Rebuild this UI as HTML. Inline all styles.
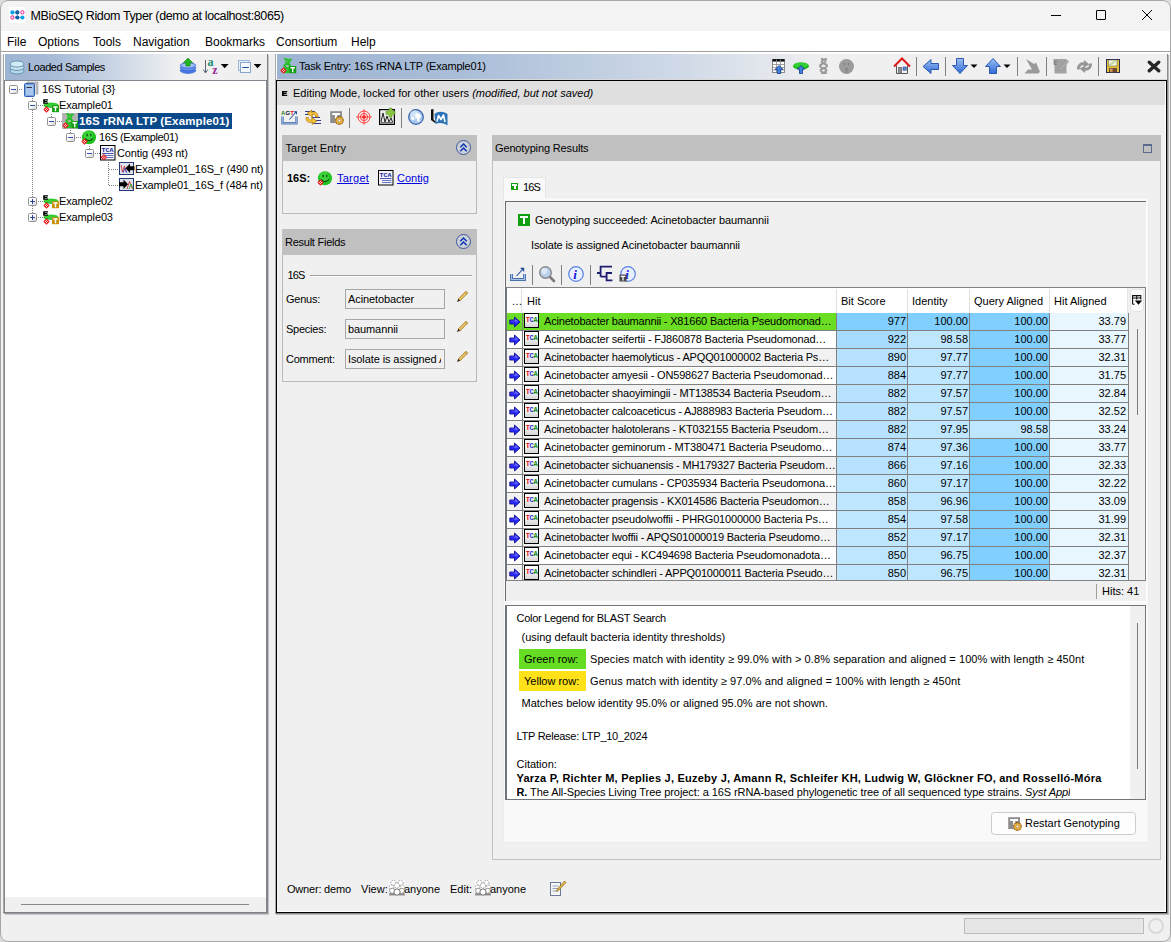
<!DOCTYPE html>
<html lang="en">
<head>
<meta charset="utf-8">
<title>MBioSEQ Ridom Typer (demo at localhost:8065)</title>
<style>
*{box-sizing:border-box;margin:0;padding:0}
html,body{width:1171px;height:942px;overflow:hidden;background:#dcdcdc}
body{font-family:"Liberation Sans",sans-serif;font-size:11px;color:#000;position:relative}
.a{position:absolute}
.t{position:absolute;white-space:nowrap;line-height:14px;height:14px}
#win{left:0;top:0;width:1171px;height:942px;background:#f0f0f0;border-radius:8px;overflow:hidden}
#frame{left:0;top:0;width:1171px;height:942px;border:1px solid #a6a6a6;border-radius:8px;pointer-events:none}
#titlebar{left:0;top:0;width:1171px;height:31px;background:#f3f3f3}
#title{left:30.5px;top:8px;font-size:12.5px;line-height:16px;height:16px;letter-spacing:-0.38px}
#menubar{left:0;top:31px;width:1171px;height:20px;background:#fff}
#menubar .t{font-size:12px;top:3px;line-height:16px;height:16px}
.hdr{background:linear-gradient(90deg,#9db4d2 0%,#a9bdd8 20%,#cfd9e7 45%,#f0f0f0 66%,#f0f0f0 100%)}
.gray{background:#c0c0c0}
a{color:#0000e0;text-decoration:underline}
/* tree */
.tr{position:absolute;left:0;height:16px;white-space:nowrap;line-height:16px}
.tr .t{top:1px}
.box{position:absolute;width:9px;height:9px;border:1px solid #919191;background:linear-gradient(135deg,#fff 40%,#d4d4d4);border-radius:1.5px}
.box i{position:absolute;left:1px;top:3px;width:5px;height:1px;background:#3050b0}
.box b{position:absolute;left:3px;top:1px;width:1px;height:5px;background:#2a3f8f}
.dv{position:absolute;width:1px;background:repeating-linear-gradient(180deg,#808080 0 1px,transparent 1px 2px)}
.dh{position:absolute;height:1px;background:repeating-linear-gradient(90deg,#808080 0 1px,transparent 1px 2px)}
/* table */
.row{position:absolute;left:0;width:622px;height:18px}
.row .c{position:absolute;top:0;height:18px;border-right:1px solid #808080;border-bottom:1px solid #808080;line-height:17px;white-space:nowrap;overflow:hidden}
.row .n{text-align:right;padding-right:1px}
.c0{left:0;width:16px}.c1{left:16px;width:314px}.c2{left:330px;width:71px}.c3{left:401px;width:62px}.c4{left:463px;width:80px}.c5{left:543px;width:79px;padding-right:2px !important}
.d1{background:#80cfff}.d2{background:#bfe6ff}.d3{background:#e8f6ff}
.tca{position:absolute;left:1px;top:0;width:15px;height:15px;border:1px solid #000;background:linear-gradient(180deg,#fafafa 30%,#d6d6d6);font-size:7px;line-height:13.5px;letter-spacing:-0.3px;font-weight:bold;text-align:center;font-family:"Liberation Mono",monospace;overflow:hidden}
.hit{position:absolute;left:21px;top:0;letter-spacing:-0.18px}
.leg{position:absolute;white-space:nowrap;line-height:14px}
.sep{position:absolute;width:1px;background:#808080}
.hdr2{background:linear-gradient(90deg,#9db4d2 0%,#a9bdd8 20%,#cfd9e7 45%,#f0f0f0 62%,#f0f0f0 100%)}
.fld{width:100px;height:20px;border:1px solid #a6a6a6;background:#f0f0f0;line-height:18px;padding-left:2px;white-space:nowrap;overflow:hidden;letter-spacing:-0.1px}
.fld span{display:block;width:93px;overflow:hidden}
.g{background:#6bdd22}.w{background:#fff}.e{background:#f2f2f2}
.d1b{background:#a6dcff}.d2a{background:#b6e2ff}
.arr{position:absolute;left:2px;top:3px}
.tca b{font-weight:bold}
#left .t{letter-spacing:-0.13px}
</style>
</head>
<body>
<svg width="0" height="0" style="position:absolute"><defs>
<g id="reddia"><path d="M3.5 0.3 L6.7 3.5 L3.5 6.7 L0.3 3.5 Z" fill="#e01010"/><path d="M3.5 1.8 V5.2 M1.8 3.5 H5.2" stroke="#fff" stroke-width="0.9"/><circle cx="3.5" cy="3.5" r="0.7" fill="#e01010"/></g>
<g id="exbase"><ellipse cx="8" cy="8.4" rx="7.4" ry="2.3" fill="#189818"/><ellipse cx="8" cy="7.7" rx="7.4" ry="2.2" fill="#35cf35"/><path d="M0.2 2.2 H5 V3.4 H1.9 V3.9 H4.4 V5.1 H1.9 V5.6 H5 V6.8 H0.2 Z" fill="#000"/><use href="#reddia" x="0" y="9"/></g>
<g id="exg"><use href="#exbase"/><rect x="9" y="8.2" width="7" height="7" fill="#12a012"/><path d="M10.3 10 H14.7 M12.5 10 V14.3" stroke="#fff" stroke-width="1.4"/></g>
<g id="exy"><use href="#exbase"/><rect x="9" y="8.2" width="7" height="7" fill="#c8900a"/><path d="M10.3 10 H14.7 M12.5 10 V14.3" stroke="#fff" stroke-width="1.4"/></g>
<g id="task"><g fill="none" stroke="#25c225" stroke-width="2.1" stroke-linecap="round"><path d="M5 1 C10.5 2.5 10.5 4.5 6.5 6 C3.5 7.5 3.5 9 7.5 10.5 C10 11.8 9 13.5 5.5 14.3"/><path d="M10.8 1.5 C5.5 3 5 4.8 8.5 6.2 C11 7.6 10.5 9.5 6.5 10.6 C4.2 11.6 4.8 13.4 8 14.3"/></g><circle cx="7.8" cy="3.6" r="0.8" fill="#b8b8b8" opacity="0.7"/><circle cx="7.3" cy="8.3" r="0.8" fill="#b8b8b8" opacity="0.7"/><rect x="9.2" y="8" width="7" height="7.2" fill="#12a012"/><path d="M10.5 9.8 H14.9 M12.7 9.8 V14.2" stroke="#fff" stroke-width="1.4"/><use href="#reddia" x="0" y="9"/></g>
<g id="smile"><circle cx="9" cy="8.2" r="7" fill="#1fc01f"/><circle cx="8.3" cy="6.5" r="4.8" fill="#4ee04e" opacity="0.55"/><path d="M7.2 4.8 V7.2 M10.8 4.8 V7.2" stroke="#0a3a0a" stroke-width="1.1"/><path d="M5 9.3 Q9 13.8 13 9.3" stroke="#0a3a0a" stroke-width="1" fill="none"/><use href="#reddia" x="1" y="9"/></g>
<g id="contig"><rect x="0.5" y="0.5" width="14.5" height="14.5" fill="#f4f4fa" stroke="#000"/><text x="1.6" y="7" font-family="Liberation Mono,monospace" font-weight="bold" font-size="6.2" fill="#1a2a9a" textLength="12" lengthAdjust="spacingAndGlyphs">TCA</text><path d="M2 8.5 H13.5" stroke="#1a2a9a" stroke-width="0.8"/><path d="M4 10.5 H13.5 M4 12.5 H13.5" stroke="#5a66b8" stroke-width="0.9"/></g>
<g id="chev"><circle cx="8.5" cy="8.5" r="7" fill="#cdd1da" stroke="#2c4a96" stroke-width="0.9"/><path d="M5.3 8.2 L8.5 5 L11.7 8.2 M5.3 12.2 L8.5 9 L11.7 12.2" fill="none" stroke="#0a32b4" stroke-width="1.5"/></g>
<g id="pencil"><path d="M12.5 1.2 L14.8 3.5 L6 12.3 L3.7 10 Z" fill="#e2bc62" stroke="#9a7a2a" stroke-width="0.7"/><path d="M3.7 10 L6 12.3 L2.2 13.8 Z" fill="#3a2a1a"/><path d="M11.3 2.4 L13.6 4.7" stroke="#9a7a2a" stroke-width="0.7"/></g>
<g id="grp"><rect x="0" y="0" width="16" height="16" fill="#fafafa"/><g fill="#fff" stroke="#8c8c8c" stroke-width="0.9" stroke-dasharray="1.5 1"><circle cx="4.5" cy="2.8" r="2.6"/><circle cx="11.5" cy="2.8" r="2.6"/><circle cx="8" cy="5.5" r="2.6"/><circle cx="2.5" cy="7.5" r="2.4"/><circle cx="13.5" cy="7.5" r="2.4"/></g><path d="M0 15.5 C0 12.5 1.5 11.5 4 12.5 L8 15.5 L12 12.5 C14.5 11.5 16 12.5 16 15.5 Z" fill="#8a8a8a"/><circle cx="3.2" cy="10.8" r="2.6" fill="#fff" stroke="#8a8a8a" stroke-width="0.9"/><circle cx="12.8" cy="10.8" r="2.6" fill="#fff" stroke="#8a8a8a" stroke-width="0.9"/><circle cx="8" cy="12" r="3.1" fill="#fff" stroke="#7a7a7a" stroke-width="1"/></g>
<g id="arrow"><path d="M0.8 4 H5.5 V1 L11 6 L5.5 11 V8 H0.8 Z" fill="#2a2aff" stroke="#10108a" stroke-width="0.9"/><path d="M1.5 4.8 H6.2 V3 L9.5 6 Z" fill="#8a8aff" opacity="0.8"/></g>
<g id="tgear"><rect x="2.2" y="2.2" width="11.8" height="11.8" fill="#8e8e8e"/><path d="M4.2 5 H12 M8.1 5 V13" stroke="#fff" stroke-width="2.2"/><g transform="translate(11.4,11.5)" fill="#dc9e22" stroke="#7a4c12" stroke-width="0.5"><rect x="-1" y="-4.2" width="2" height="8.4"/><rect x="-1" y="-4.2" width="2" height="8.4" transform="rotate(45)"/><rect x="-1" y="-4.2" width="2" height="8.4" transform="rotate(90)"/><rect x="-1" y="-4.2" width="2" height="8.4" transform="rotate(135)"/><circle r="3" fill="#ebb544" stroke="none"/><circle r="1.3" fill="#fff" stroke-width="0.4"/></g></g>
<linearGradient id="bl" x1="0" y1="0" x2="0" y2="1"><stop offset="0" stop-color="#9cc0f4"/><stop offset="1" stop-color="#2f6ad8"/></linearGradient>
<g id="info"><circle cx="9" cy="9" r="7.3" fill="#e8f0ff" stroke="#5a82e0" stroke-width="1.2"/><text x="6.2" y="13.6" font-family="Liberation Serif,serif" font-style="italic" font-weight="bold" font-size="13" fill="#1a1ae0">i</text></g>
</defs></svg>
<div id="win" class="a">

<!-- title bar -->
<div id="titlebar" class="a">
<svg class="a" style="left:9px;top:7px" width="16" height="16" viewBox="0 0 16 16"><rect width="16" height="16" fill="#fff"/>
<circle cx="3.4" cy="5.4" r="2.1" fill="#00a2e8"/><circle cx="8.3" cy="5.4" r="2.1" fill="#0b5ea8"/><circle cx="13.4" cy="5.4" r="1.6" fill="#fff" stroke="#f03ea0" stroke-width="1.1"/>
<circle cx="3.4" cy="10.5" r="1.6" fill="#fff" stroke="#f03ea0" stroke-width="1.1"/><circle cx="8.3" cy="10.5" r="2.1" fill="#0b5ea8"/><circle cx="13.4" cy="10.5" r="2.1" fill="#00a2e8"/>
<path d="M5.5 5.4 H6.2 M8.3 7.5 V8.4 M10.4 10.5 H11.3" stroke="#0b5ea8" stroke-width="0.7"/></svg>
<div id="title" class="t">MBioSEQ Ridom Typer (demo at localhost:8065)</div>
<div class="a" style="left:1051px;top:15px;width:10px;height:1px;background:#000"></div>
<div class="a" style="left:1096px;top:10px;width:10px;height:10px;border:1px solid #000;border-radius:1px"></div>
<svg class="a" style="left:1141px;top:9px" width="12" height="12" viewBox="0 0 12 12"><path d="M1 1 L11 11 M11 1 L1 11" stroke="#000" stroke-width="1" fill="none"/></svg>
</div>

<!-- menu bar -->
<div id="menubar" class="a">
<div class="t" style="left:7px">File</div>
<div class="t" style="left:38px">Options</div>
<div class="t" style="left:93px">Tools</div>
<div class="t" style="left:133px">Navigation</div>
<div class="t" style="left:205px">Bookmarks</div>
<div class="t" style="left:276px">Consortium</div>
<div class="t" style="left:351px">Help</div>
</div>
<div class="a" style="left:0;top:51px;width:1171px;height:1px;background:#a0a0a0"></div>
<div class="a" style="left:0;top:52px;width:1171px;height:2px;background:#fff"></div>

<!-- LEFT PANEL -->
<div id="left" class="a" style="left:4px;top:54px;width:263px;height:858px;background:#fff">
<div class="a" style="left:-1px;top:0;width:1px;height:859px;background:#a8a8a8"></div>
<div class="a" style="left:262px;top:26px;width:1px;height:833px;background:#828790"></div><div class="a" style="left:263px;top:0;width:1px;height:861px;background:#80848a"></div><div class="a" style="left:264px;top:1px;width:1px;height:860px;background:#c2c2c2"></div>
<div class="a" style="left:-1px;top:858px;width:265px;height:1px;background:#7c8088"></div><div class="a" style="left:0;top:859px;width:264px;height:1px;background:#9a9ca0"></div><div class="a" style="left:1px;top:860px;width:264px;height:1px;background:#cacaca"></div>
<div class="a" style="left:0;top:26px;width:1px;height:832px;background:#828790"></div>
<div class="a hdr" style="left:1px;top:0;width:262px;height:26px">
<svg class="a" style="left:4px;top:6px" width="16" height="15" viewBox="0 0 16 15"><g stroke="#4f86a8" stroke-width="0.8"><ellipse cx="8" cy="11" rx="7" ry="3" fill="#b8d8e8"/><ellipse cx="8" cy="7.5" rx="7" ry="3" fill="#c4e0ee"/><ellipse cx="8" cy="4" rx="7" ry="3" fill="#d4eaf4"/></g></svg>
<div class="t" style="left:23px;top:6px;letter-spacing:-0.4px">Loaded Samples</div>
<svg class="a" style="left:174px;top:3px" width="18" height="18" viewBox="0 0 18 18"><g stroke="#2f5fd0" stroke-width="0.7"><ellipse cx="9" cy="13.6" rx="7.8" ry="2.8" fill="#4a7ae8"/><ellipse cx="9" cy="11" rx="7.8" ry="2.8" fill="#6a96f0"/><ellipse cx="9" cy="8.4" rx="7.8" ry="2.8" fill="#8ab0f6"/></g><ellipse cx="9" cy="8.2" rx="5" ry="1.5" fill="#c4d8fb" opacity="0.7"/><path d="M9 1 L13.8 5.8 H11.2 V9 H6.8 V5.8 H4.2 Z" fill="#22b422" stroke="#158a15" stroke-width="0.6"/></svg>
<svg class="a" style="left:196px;top:3px" width="30" height="20" viewBox="0 0 30 20"><path d="M4.5 3 V15.5 M2.2 12.5 L4.5 16 L6.8 12.5" stroke="#5a6478" stroke-width="1" fill="none"/><text x="6.6" y="8.8" font-family="Liberation Serif,serif" font-weight="bold" font-size="12" fill="#1a8a72">a</text><text x="11.2" y="17" font-family="Liberation Serif,serif" font-weight="bold" font-size="12" fill="#962a96">z</text><path d="M19.8 7 H27.6 L23.7 11.2 Z" fill="#000"/></svg>
<svg class="a" style="left:231px;top:4px" width="28" height="18" viewBox="0 0 28 18"><rect x="2.5" y="2.5" width="10.5" height="10" fill="#e8f0fa" stroke="#9ab4d8"/><rect x="4.5" y="4.5" width="10" height="10" fill="#f4f8fd" stroke="#8aa6cc"/><path d="M6.3 9.5 H12.8" stroke="#1f4f9a" stroke-width="1.2"/><path d="M17.7 6 H25.4 L21.5 10.2 Z" fill="#000"/></svg>
</div>
<div class="a" style="left:0;top:26px;width:263px;height:1px;background:#828790"></div>
<!-- tree lines -->
<div class="dv" style="left:28px;top:44px;height:122px"></div>
<div class="dv" style="left:47px;top:60px;height:8px"></div>
<div class="dv" style="left:66px;top:76px;height:8px"></div>
<div class="dv" style="left:85px;top:92px;height:8px"></div>
<div class="dv" style="left:104px;top:108px;height:24px"></div>
<div class="dh" style="left:15px;top:35px;width:4px"></div>
<div class="dh" style="left:34px;top:51px;width:5px"></div>
<div class="dh" style="left:53px;top:67px;width:5px"></div>
<div class="dh" style="left:72px;top:83px;width:5px"></div>
<div class="dh" style="left:91px;top:99px;width:5px"></div>
<div class="dh" style="left:105px;top:115px;width:9px"></div>
<div class="dh" style="left:105px;top:131px;width:9px"></div>
<div class="dh" style="left:34px;top:147px;width:5px"></div>
<div class="dh" style="left:34px;top:163px;width:5px"></div>
<!-- row1 -->
<div class="box" style="left:5px;top:31px"><i></i></div>
<svg class="a" style="left:19px;top:27px" width="17" height="17" viewBox="0 0 17 17"><path d="M4 1 H15 V13 H13 V3 H4 Z" fill="#c8c8c8" stroke="#909090" stroke-width="0.6"/><rect x="1.5" y="2.5" width="10" height="13" rx="1" fill="#7fa8de" stroke="#2f5fae"/><rect x="3" y="4" width="7" height="10" fill="#a9c6ec"/><path d="M3.5 6.5 H9" stroke="#334" stroke-width="1"/></svg>
<div class="t" style="left:38px;top:28px">16S Tutorial {3}</div>
<!-- row2 -->
<div class="box" style="left:24px;top:47px"><i></i></div>
<svg class="a ex" style="left:39px;top:43px" width="17" height="17" viewBox="0 0 17 17"><use href="#exg"/></svg>
<div class="t" style="left:55px;top:44px">Example01</div>
<!-- row3 -->
<div class="box" style="left:43px;top:63px"><i></i></div>
<div class="a" style="left:58px;top:59px;width:16px;height:16px;background:#b4b4b4"></div>
<svg class="a" style="left:58px;top:59px" width="17" height="17" viewBox="0 0 17 17"><use href="#task"/></svg>
<div class="a" style="left:74px;top:59px;width:154px;height:16px;background:#0b4a8a"></div>
<div class="t" style="left:75px;top:60px;color:#fff;font-weight:bold;font-size:11.5px;letter-spacing:0.13px">16S rRNA LTP (Example01)</div>
<!-- row4 -->
<div class="box" style="left:62px;top:79px"><i></i></div>
<svg class="a" style="left:76px;top:75px" width="18" height="17" viewBox="0 0 18 17"><use href="#smile"/></svg>
<div class="t" style="left:95px;top:76px;letter-spacing:-0.4px">16S (Example01)</div>
<!-- row5 -->
<div class="box" style="left:81px;top:95px"><i></i></div>
<svg class="a" style="left:95.5px;top:91px" width="17" height="17" viewBox="0 0 17 17"><use href="#contig"/><use href="#reddia" x="0.3" y="8.8"/></svg>
<div class="t" style="left:113px;top:92px">Contig (493 nt)</div>
<!-- row6 -->
<svg class="a" style="left:115px;top:108px" width="16" height="14" viewBox="0 0 16 14"><rect x="0.5" y="0.5" width="14" height="12" fill="#dfe3ee" stroke="#223a7a"/><path d="M2 3 L3.5 10 L5.5 4 L7 10" stroke="#c02020" stroke-width="0.8" fill="none"/><path d="M4 11 L6 6 L8 11" stroke="#2030c0" stroke-width="0.7" fill="none"/><path d="M6.5 6.3 L11 1.6 V4.3 H15.5 V8.3 H11 V11 Z" fill="#000"/></svg>
<div class="t" style="left:131px;top:108px">Example01_16S_r (490 nt)</div>
<!-- row7 -->
<svg class="a" style="left:115px;top:124px" width="16" height="14" viewBox="0 0 16 14"><rect x="0.5" y="0.5" width="14" height="12" fill="#dfe3ee" stroke="#223a7a"/><path d="M8 11 L10.5 3.5 L13.5 11" stroke="#c02020" stroke-width="0.8" fill="none"/><path d="M10 11 L12 6 L14 10" stroke="#20a020" stroke-width="0.8" fill="none"/><path d="M9 6.3 L4.5 1.6 V4.3 H0 V8.3 H4.5 V11 Z" fill="#000"/></svg>
<div class="t" style="left:131px;top:124px">Example01_16S_f (484 nt)</div>
<!-- row8 -->
<div class="box" style="left:24px;top:143px"><i></i><b></b></div>
<svg class="a" style="left:39px;top:139px" width="17" height="17" viewBox="0 0 17 17"><use href="#exy"/></svg>
<div class="t" style="left:55px;top:140px">Example02</div>
<!-- row9 -->
<div class="box" style="left:24px;top:159px"><i></i><b></b></div>
<svg class="a" style="left:39px;top:155px" width="17" height="17" viewBox="0 0 17 17"><use href="#exy"/></svg>
<div class="t" style="left:55px;top:156px">Example03</div>
<!-- bottom scrollbar area -->
<div class="a" style="left:1px;top:843px;width:261px;height:15px;background:#f0f0f0"></div>
<div class="a" style="left:17px;top:850px;width:228px;height:1px;background:#8a8a8a"></div>
</div>

<!-- RIGHT PANEL -->
<div id="right" class="a" style="left:0;top:0;width:0;height:0">
<div class="a" style="left:275px;top:54px;width:1px;height:859px;background:#a8a8a8"></div>
<div class="a" style="left:276px;top:54px;width:1px;height:26px;background:#fff"></div>
<div class="a hdr2" style="left:277px;top:54px;width:890px;height:25px"></div>
<div class="a" style="left:276px;top:79px;width:891px;height:1px;background:#d8d8d8"></div>
<div class="a" style="left:276px;top:80px;width:891px;height:833px;border:1px solid #000;background:#f0f0f0"></div>
<div class="a" style="left:1165px;top:81px;width:1px;height:831px;background:#fff"></div>
<div class="a" style="left:277px;top:911px;width:889px;height:1px;background:#fff"></div>
<div class="a" style="left:1167px;top:54px;width:1px;height:860px;background:#8c8c8c"></div><div class="a" style="left:1168px;top:55px;width:1px;height:860px;background:#b8b8b8"></div>
<div class="a" style="left:275px;top:913px;width:893px;height:1px;background:#8c8c8c"></div><div class="a" style="left:276px;top:914px;width:893px;height:1px;background:#bcbcbc"></div>
<!-- header content -->
<svg class="a" style="left:279.8px;top:58px" width="17" height="17" viewBox="0 0 17 17"><use href="#task"/></svg>
<div class="t" style="left:299px;top:59px;letter-spacing:-0.2px">Task Entry: 16S rRNA LTP (Example01)</div>
<div id="htb" class="a" style="left:0;top:0">
<!-- table upload -->
<svg class="a" style="left:771px;top:58px" width="16" height="16" viewBox="0 0 16 16"><rect x="1.5" y="1.5" width="12" height="13" fill="#fff" stroke="#8a8a8a"/><rect x="1.5" y="1" width="12" height="2.6" fill="#111"/><path d="M5.5 1.5 V14.5 M9.5 1.5 V14.5 M1.5 6.5 H13.5 M1.5 9.5 H13.5 M1.5 12 H13.5" stroke="#8a8a8a" stroke-width="0.8"/><path d="M8 7.5 L12 11.5 H9.7 V15.5 H6.3 V11.5 H4 Z" fill="#3f7fe0" stroke="#143a8a" stroke-width="0.8"/></svg>
<!-- green upload -->
<svg class="a" style="left:792px;top:58px" width="18" height="16" viewBox="0 0 18 16"><ellipse cx="9" cy="8" rx="8" ry="3.6" fill="#17b417"/><ellipse cx="9" cy="7.2" rx="7" ry="2.6" fill="#2fd02f"/><path d="M9 7.5 L12.6 11.2 H10.5 V15.5 H7.5 V11.2 H5.4 Z" fill="#3f7fe0" stroke="#143a8a" stroke-width="0.8"/></svg>
<!-- gray dna -->
<svg class="a" style="left:818px;top:58px" width="12" height="16" viewBox="0 0 12 16"><path d="M3 0.5 C9 2.5 9 4 4 6 C1 7.5 1 9 6 10.5 C10 12 9 14 3 15.5 M9 0.5 C3 2.5 2 4 7 6 C10 7.5 10 9 5 10.5 C1 12 2 14 9 15.5" stroke="#9a9a9a" stroke-width="2" fill="none"/></svg>
<!-- gray smiley -->
<svg class="a" style="left:838px;top:58px" width="17" height="17" viewBox="0 0 17 17"><circle cx="8.5" cy="8.5" r="7.5" fill="#9c9c9c"/><path d="M6.5 5 V7 M10.5 5 V7" stroke="#7a7a7a" stroke-width="1.1"/><path d="M8.5 9 L11 12 H9.5 V15 H7.5 V12 H6 Z" fill="#8a8a8a"/></svg>
<!-- home -->
<svg class="a" style="left:893px;top:57px" width="18" height="18" viewBox="0 0 18 18"><path d="M3.5 8.5 V16.5 H14.5 V8.5" fill="#f4f4f4" stroke="#555" stroke-width="1"/><rect x="5.5" y="10.5" width="3" height="6" fill="#8a8a8a" stroke="#555" stroke-width="0.6"/><rect x="10" y="10" width="3.2" height="3.2" fill="#5a8ad8" stroke="#2a4a8a" stroke-width="0.6"/><path d="M1 9.5 L9 1.5 L17 9.5" fill="none" stroke="#e01818" stroke-width="2" stroke-linejoin="miter"/></svg>
<div class="sep" style="left:916px;top:57px;height:19px"></div>
<!-- left arrow -->
<svg class="a" style="left:922px;top:58px" width="18" height="17" viewBox="0 0 18 17"><path d="M1 8.5 L9 1.5 V5.5 H16.5 V11.5 H9 V15.5 Z" fill="url(#bl)" stroke="#2a5ab0" stroke-width="1"/></svg>
<div class="sep" style="left:945px;top:57px;height:19px"></div>
<!-- down arrow -->
<svg class="a" style="left:951px;top:57px" width="28" height="18" viewBox="0 0 28 18"><path d="M9 16.5 L1.5 8.5 H5.5 V1.5 H12.5 V8.5 H16.5 Z" fill="url(#bl)" stroke="#2a5ab0" stroke-width="1"/><path d="M19.5 7.5 H26.5 L23 11 Z" fill="#000"/></svg>
<!-- up arrow -->
<svg class="a" style="left:984px;top:57px" width="28" height="18" viewBox="0 0 28 18"><path d="M9 1.5 L16.5 9.5 H12.5 V16.5 H5.5 V9.5 H1.5 Z" fill="url(#bl)" stroke="#2a5ab0" stroke-width="1"/><path d="M19.5 7.5 H26.5 L23 11 Z" fill="#000"/></svg>
<div class="sep" style="left:1017px;top:57px;height:19px"></div>
<!-- gray arrow -->
<svg class="a" style="left:1023px;top:57px" width="18" height="18" viewBox="0 0 18 18"><path d="M3 2 L11 7 L13 5.5 L17 15 L15 16.5 H1.5 L5 12.5 H9 L7 9 Z" fill="#9a9a9a"/></svg>
<div class="sep" style="left:1046px;top:57px;height:19px"></div>
<!-- gray doc -->
<svg class="a" style="left:1052px;top:58px" width="18" height="17" viewBox="0 0 18 17"><path d="M1.5 1 H13.5 L17 3 L14.5 6.5 V15.5 H2.5 V7 H1.5 Z" fill="#a2a2a2"/><path d="M5 3 H2.5 V6.5 H5 M2.5 4.7 H4.6" stroke="#808080" stroke-width="0.9" fill="none"/><path d="M14.5 2.5 L7.5 10.5 L6.5 13 L9 12 L16 4" fill="#b4b4b4" stroke="#8c8c8c" stroke-width="0.6"/></svg>
<!-- gray sync -->
<svg class="a" style="left:1076px;top:58px" width="17" height="17" viewBox="0 0 17 17"><g fill="none" stroke="#969696" stroke-width="2.8"><path d="M2.5 11.5 C2 7.5 5 5 9 6"/><path d="M14.5 5.5 C15 9.5 12 12 8 11"/></g><path d="M8 2 L13.5 6.5 L7.5 9.5 Z" fill="#969696"/><path d="M9 15 L3.5 10.5 L9.5 7.5 Z" fill="#969696"/></svg>
<div class="sep" style="left:1098px;top:57px;height:19px"></div>
<!-- save -->
<svg class="a" style="left:1106px;top:59px" width="14" height="14" viewBox="0 0 14 14"><rect x="0.5" y="0.5" width="13" height="13" fill="#e2c23a" stroke="#2a2a55" stroke-width="1"/><rect x="2.5" y="1" width="8.5" height="6" fill="#f2f6e2" stroke="#5a5a3a" stroke-width="0.5"/><path d="M3.2 6.3 L10 1.6" stroke="#c4d6a2" stroke-width="2"/><rect x="3" y="9" width="8" height="4.5" fill="#6a4a34"/><rect x="4" y="9.6" width="2.6" height="3.2" fill="#d89a58"/></svg>
<!-- X -->
<svg class="a" style="left:1147px;top:60px" width="14" height="13" viewBox="0 0 14 13"><path d="M2.3 2.2 L11.7 10.8 M11.7 2.2 L2.3 10.8" stroke="#262626" stroke-width="3.4" stroke-linecap="round"/></svg>
</div>
<!-- editing bar -->
<div class="a" style="left:277px;top:81px;width:888px;height:24px;background:#dfdfdf"></div>
<svg class="a" style="left:282px;top:91px" width="5.6" height="5.2" viewBox="0 0 6 6" preserveAspectRatio="none"><path d="M0 0 H5.6 V1.4 H1.9 V2.1 H5 V3.5 H1.9 V4.3 H5.6 V5.7 H0 Z" fill="#000"/></svg>
<div class="t" style="left:293px;top:86px">Editing Mode, locked for other users <i>(modified, but not saved)</i></div>
<div id="tb2" class="a" style="left:0;top:0">
<svg class="a" style="left:281px;top:109px" width="17" height="17" viewBox="0 0 17 17"><text x="0" y="5.6" font-family="Liberation Sans,sans-serif" font-weight="bold" font-size="5.8" letter-spacing="0.3"><tspan fill="#108010">A</tspan><tspan fill="#111">G</tspan><tspan fill="#e01010">T</tspan></text><path d="M1.5 7.5 V14.3 H15.5 V7.5" fill="none" stroke="#5078b4" stroke-width="2.4"/><path d="M1.5 7.5 V14.3 H15.5 V7.5" fill="none" stroke="#c4d4ec" stroke-width="0.6"/><path d="M8.5 10.5 L14.5 3.5" stroke="#1f4a9a" stroke-width="1"/><path d="M12.5 2.2 H16 V5.7 Z" fill="#1f4a9a"/></svg>
<svg class="a" style="left:304px;top:109px" width="18" height="17" viewBox="0 0 18 17"><path d="M1 2.5 H11 M1 5.5 H9 M8 8.5 H16 M8 11.5 H17 M9 14.5 H17" stroke="#3a3a8a" stroke-width="1"/><path d="M14 8 C14.5 3.5 10 2 7.5 3.5 L8 1 L3 4.5 L8.5 8 L8 5.8 C10 5 12 6 11.5 8 Z" fill="#f6c23a" stroke="#a87a10" stroke-width="0.7"/><path d="M2 8.5 C1.5 13 6 14.5 8.5 13 L8 15.5 L13 12 L7.5 8.5 L8 10.7 C6 11.5 4 10.5 4.5 8.5 Z" fill="#f6c23a" stroke="#a87a10" stroke-width="0.7"/></svg>
<svg class="a" style="left:328px;top:109px" width="17" height="17" viewBox="0 0 17 17"><use href="#tgear"/></svg>
<div class="sep" style="left:349px;top:108px;height:20px"></div>
<svg class="a" style="left:355px;top:108px" width="18" height="18" viewBox="0 0 18 18"><g fill="none" stroke="#ff3a3a"><circle cx="9" cy="9" r="6" stroke-width="1"/><circle cx="9" cy="9" r="3.6" stroke-width="1"/><path d="M9 1.2 V16.8 M1.2 9 H16.8" stroke-width="0.9"/></g><circle cx="9" cy="9" r="1.8" fill="#ff2020"/></svg>
<svg class="a" style="left:378px;top:107px" width="19" height="19" viewBox="0 0 19 19"><rect x="1.6" y="2.6" width="14.8" height="14.8" fill="#ececec" stroke="#000" stroke-width="1.2"/><path d="M3 15 L5 6 L7 15 L9 9 L11 15 L13 11 L14.5 15" fill="none" stroke="#222" stroke-width="1"/><path d="M3 15.8 H15" stroke="#222" stroke-width="0.9"/><path d="M11 1.2 H14 V4.2 H17 V7.2 H14 V10.2 H11 V7.2 H8 V4.2 H11 Z" fill="#8cc63f" stroke="#5a9a24" stroke-width="0.6"/></svg>
<div class="sep" style="left:401px;top:108px;height:20px"></div>
<svg class="a" style="left:407px;top:108px" width="18" height="18" viewBox="0 0 18 18"><circle cx="9" cy="9" r="7.3" fill="#a8c8f0" stroke="#3a62a8" stroke-width="1.2"/><circle cx="7.5" cy="7" r="4.5" fill="#d8e8fa" opacity="0.8"/><path d="M9 5 L13 6 L14 9 L12 11 L13 13 L10.5 14 L10 10 L8 8 Z M4 9 L7 10 L6.5 12.5 L4.5 11.5 Z" fill="#fff"/></svg>
<svg class="a" style="left:430px;top:108px" width="19" height="19" viewBox="0 0 19 19"><path d="M1 1.5 L3.5 1 V11.5 L6 14 L5 15 L1 12 Z" fill="#111"/><path d="M4.5 6 C8 3 13 3 17.5 6 V17.5 C13 14.5 9 14.5 5.5 16 Z" fill="#2a72b8"/><path d="M7 13.5 L8.5 7.5 L11 11.5 L13.5 7 L15 14" fill="none" stroke="#fff" stroke-width="1.6" stroke-linejoin="round"/></svg>
</div>
<!-- Target Entry -->
<div class="a" style="left:282px;top:135px;width:195px;height:79px;border:1px solid #b9b9b9"></div>
<div class="a gray" style="left:282px;top:135px;width:195px;height:26px"></div>
<div class="t" style="left:285.5px;top:141px;letter-spacing:0.1px">Target Entry</div>
<svg class="a" style="left:455px;top:139px" width="17" height="17" viewBox="0 0 17 17"><use href="#chev"/></svg>
<div class="t" style="left:287px;top:171px;font-weight:bold">16S:</div>
<svg class="a" style="left:316px;top:170px" width="18" height="17" viewBox="0 0 18 17"><use href="#smile"/></svg>
<div class="t" style="left:337px;top:171px;letter-spacing:0.25px"><a>Target</a></div>
<svg class="a" style="left:377.5px;top:170px" width="17" height="17" viewBox="0 0 17 17"><use href="#contig"/></svg>
<div class="t" style="left:397px;top:171px"><a>Contig</a></div>
<!-- Result Fields -->
<div class="a" style="left:282px;top:229px;width:195px;height:153px;border:1px solid #b9b9b9"></div>
<div class="a gray" style="left:282px;top:229px;width:195px;height:26px"></div>
<div class="t" style="left:285px;top:235px;letter-spacing:-0.25px">Result Fields</div>
<svg class="a" style="left:455px;top:233px" width="17" height="17" viewBox="0 0 17 17"><use href="#chev"/></svg>
<div class="t" style="left:287.5px;top:268px;letter-spacing:-0.9px">16S</div>
<div class="a" style="left:310px;top:275px;width:162px;height:1px;background:#a0a0a0"></div><div class="a" style="left:310px;top:276px;width:162px;height:1px;background:#fff"></div>
<div class="t" style="left:286px;top:292px;letter-spacing:-0.25px">Genus:</div>
<div class="a fld" style="left:345px;top:289px">Acinetobacter</div>
<div class="t" style="left:286px;top:322px;letter-spacing:-0.25px">Species:</div>
<div class="a fld" style="left:345px;top:319px">baumannii</div>
<div class="t" style="left:286px;top:352px;letter-spacing:-0.25px">Comment:</div>
<div class="a fld" style="left:345px;top:349px"><span>Isolate is assigned Acinetobacter baumannii</span></div>
<svg class="a" style="left:455px;top:290px" width="14" height="14" viewBox="0 0 16 16"><use href="#pencil"/></svg>
<svg class="a" style="left:455px;top:320px" width="14" height="14" viewBox="0 0 16 16"><use href="#pencil"/></svg>
<svg class="a" style="left:455px;top:350px" width="14" height="14" viewBox="0 0 16 16"><use href="#pencil"/></svg>
<!-- Genotyping Results -->
<div id="geno" class="a" style="left:0;top:0">
<div class="a" style="left:492px;top:135px;width:669px;height:725px;border:1px solid #c2c2c2"></div>
<div class="a gray" style="left:492px;top:135px;width:669px;height:26px"></div>
<div class="t" style="left:495px;top:141px;letter-spacing:-0.14px">Genotyping Results</div>
<div class="a" style="left:1143px;top:144px;width:9px;height:9px;border:1px solid #5a6a8a;border-top:2px solid #5a6a8a"></div>
<!-- tab -->
<div class="a" style="left:503px;top:197px;width:646px;height:646px;background:#f9f9f9;border:1px solid #ececec"></div>
<div class="a" style="left:503px;top:177px;width:43px;height:21px;background:#f9f9f9;border:1px solid #e6e6e6;border-bottom:none"></div>
<div class="a" style="left:506px;top:202px;width:640px;height:597px;background:#f0f0f0"></div>
<div class="a" style="left:511px;top:183px;width:7px;height:7px;background:#12a012"></div>
<div class="a" style="left:512px;top:184px;width:5px;height:1.5px;background:#fff"></div><div class="a" style="left:514px;top:184px;width:1.5px;height:5px;background:#fff"></div>
<div class="t" style="left:523px;top:180px;letter-spacing:-0.9px">16S</div>
<!-- tab content panel -->
<div class="a" style="left:505px;top:201px;width:641px;height:1px;background:#6c6c6c"></div>
<div class="a" style="left:505px;top:201px;width:1px;height:400px;background:#6c6c6c"></div>
<div class="a" style="left:1146px;top:201px;width:1px;height:599px;background:#fdfdfd"></div>
<div class="a" style="left:518px;top:214px;width:12px;height:12px;background:#12a012"></div>
<div class="a" style="left:520px;top:216px;width:8px;height:2px;background:#fff"></div><div class="a" style="left:523px;top:216px;width:2px;height:8px;background:#fff"></div>
<div class="t" style="left:535px;top:213px;letter-spacing:-0.12px">Genotyping succeeded: Acinetobacter baumannii</div>
<div class="t" style="left:531px;top:238px;letter-spacing:-0.12px">Isolate is assigned Acinetobacter baumannii</div>
<div id="tb3" class="a" style="left:0;top:0">
<svg class="a" style="left:509px;top:265px" width="18" height="18" viewBox="0 0 18 18"><path d="M2.5 9 V14.5 H15.5 V9" fill="none" stroke="#4a72b0" stroke-width="3"/><path d="M2.5 9 V14.5 H15.5 V9" fill="none" stroke="#a9c2e6" stroke-width="1.1"/><path d="M7.5 11 L14 4" stroke="#1f4a9a" stroke-width="1.1"/><path d="M11 2.8 H15.2 V7 Z" fill="#1f4a9a"/></svg>
<div class="sep" style="left:532px;top:265px;height:20px"></div>
<svg class="a" style="left:538px;top:265px" width="18" height="18" viewBox="0 0 18 18"><path d="M11 11 L16 16" stroke="#7a7a7a" stroke-width="2.6" stroke-linecap="round"/><circle cx="7.5" cy="7.5" r="5.8" fill="#b8d0ec" stroke="#8a8a8a" stroke-width="1.4"/><circle cx="6.3" cy="6" r="3" fill="#e4eefa" opacity="0.8"/></svg>
<div class="sep" style="left:561px;top:265px;height:20px"></div>
<svg class="a" style="left:567px;top:265px" width="18" height="18" viewBox="0 0 18 18"><use href="#info"/></svg>
<div class="sep" style="left:590px;top:265px;height:20px"></div>
<svg class="a" style="left:597px;top:265px" width="18" height="18" viewBox="0 0 18 18"><path d="M0 8 H3.6 M3.6 1.6 V11.7 M2.7 1.6 H15 M3.6 11.7 H9.6 M9.6 8 V15.3 M8.7 8 H15 M8.7 15.3 H15.4" fill="none" stroke="#1c1c70" stroke-width="1.8"/></svg>
<svg class="a" style="left:619px;top:265px" width="18" height="18" viewBox="0 0 18 18"><use href="#info"/><rect x="0.5" y="9.5" width="7" height="7" fill="#4a4a4a"/><path d="M1.8 11.3 H6.2 M4 11.3 V15.5" stroke="#fff" stroke-width="1.3"/></svg>
</div>
<!-- table -->
<div class="a" style="left:505px;top:287px;width:641px;height:294px;border:1px solid #828282;border-left:2px solid #70757c;background:#f0f0f0"></div>
<div class="a" style="left:507px;top:288px;width:620px;height:25px;background:#fff"></div>
<div class="a" style="left:1127px;top:288px;width:1px;height:25px;background:#e6e6e6"></div>
<div class="a" style="left:521px;top:289px;width:1px;height:23px;background:#e0e0e0"></div>
<div class="a" style="left:836px;top:289px;width:1px;height:23px;background:#e0e0e0"></div>
<div class="a" style="left:907px;top:289px;width:1px;height:23px;background:#e0e0e0"></div>
<div class="a" style="left:969px;top:289px;width:1px;height:23px;background:#e0e0e0"></div>
<div class="a" style="left:1049px;top:289px;width:1px;height:23px;background:#e0e0e0"></div>
<div class="t" style="left:512px;top:294px;letter-spacing:0.4px">...</div>
<div class="t" style="left:527px;top:294px">Hit</div>
<div class="t" style="left:841px;top:294px">Bit Score</div>
<div class="t" style="left:912px;top:294px">Identity</div>
<div class="t" style="left:974px;top:294px">Query Aligned</div>
<div class="t" style="left:1054px;top:294px">Hit Aligned</div>
<div class="a" style="left:1130px;top:289px;width:14px;height:23px;background:#fbfbfb;border:1px solid #e4e4e4;border-radius:3.5px"></div>
<svg class="a" style="left:1132px;top:295px" width="11" height="11" viewBox="0 0 11 11"><path d="M0.6 9.2 V0.6 H8.8 V4.5 M0.6 3 H8.8 M4.7 0.6 V4.6 M0.6 9.2 H2.5" fill="none" stroke="#111" stroke-width="1.1"/><path d="M2.8 5.6 H10.2 L6.5 9.8 Z" fill="#000"/></svg>
<div class="a" style="left:1137px;top:329px;width:1px;height:86px;background:#7a7a7a"></div>
<div class="a" style="left:507px;top:313px;width:622px;height:267px;overflow:hidden">
<div class="row" style="top:0px"><div class="c c0 g"><svg width="12" height="12" viewBox="0 0 12 12" class="arr"><use href="#arrow"/></svg></div><div class="c c1 g"><span class="tca"><b style="color:#e01010">T</b><b style="color:#2030d0">C</b><b style="color:#108a10">A</b></span><span class="hit">Acinetobacter baumannii - X81660 Bacteria Pseudomonad…</span></div><div class="c c2 n d1">977</div><div class="c c3 n d1">100.00</div><div class="c c4 n d1">100.00</div><div class="c c5 n d3">33.79</div></div>
<div class="row" style="top:18px"><div class="c c0 w"><svg width="12" height="12" viewBox="0 0 12 12" class="arr"><use href="#arrow"/></svg></div><div class="c c1 w"><span class="tca"><b style="color:#e01010">T</b><b style="color:#2030d0">C</b><b style="color:#108a10">A</b></span><span class="hit">Acinetobacter seifertii - FJ860878 Bacteria Pseudomonad…</span></div><div class="c c2 n d1b">922</div><div class="c c3 n d2">98.58</div><div class="c c4 n d1">100.00</div><div class="c c5 n d3">33.77</div></div>
<div class="row" style="top:36px"><div class="c c0 e"><svg width="12" height="12" viewBox="0 0 12 12" class="arr"><use href="#arrow"/></svg></div><div class="c c1 e"><span class="tca"><b style="color:#e01010">T</b><b style="color:#2030d0">C</b><b style="color:#108a10">A</b></span><span class="hit">Acinetobacter haemolyticus - APQQ01000002 Bacteria Ps…</span></div><div class="c c2 n d2a">890</div><div class="c c3 n d2">97.77</div><div class="c c4 n d1">100.00</div><div class="c c5 n d3">32.31</div></div>
<div class="row" style="top:54px"><div class="c c0 w"><svg width="12" height="12" viewBox="0 0 12 12" class="arr"><use href="#arrow"/></svg></div><div class="c c1 w"><span class="tca"><b style="color:#e01010">T</b><b style="color:#2030d0">C</b><b style="color:#108a10">A</b></span><span class="hit">Acinetobacter amyesii - ON598627 Bacteria Pseudomonad…</span></div><div class="c c2 n d2a">884</div><div class="c c3 n d2">97.77</div><div class="c c4 n d1">100.00</div><div class="c c5 n d3">31.75</div></div>
<div class="row" style="top:72px"><div class="c c0 e"><svg width="12" height="12" viewBox="0 0 12 12" class="arr"><use href="#arrow"/></svg></div><div class="c c1 e"><span class="tca"><b style="color:#e01010">T</b><b style="color:#2030d0">C</b><b style="color:#108a10">A</b></span><span class="hit">Acinetobacter shaoyimingii - MT138534 Bacteria Pseudom…</span></div><div class="c c2 n d2a">882</div><div class="c c3 n d2">97.57</div><div class="c c4 n d1">100.00</div><div class="c c5 n d3">32.84</div></div>
<div class="row" style="top:90px"><div class="c c0 w"><svg width="12" height="12" viewBox="0 0 12 12" class="arr"><use href="#arrow"/></svg></div><div class="c c1 w"><span class="tca"><b style="color:#e01010">T</b><b style="color:#2030d0">C</b><b style="color:#108a10">A</b></span><span class="hit">Acinetobacter calcoaceticus - AJ888983 Bacteria Pseudom…</span></div><div class="c c2 n d2a">882</div><div class="c c3 n d2">97.57</div><div class="c c4 n d1">100.00</div><div class="c c5 n d3">32.52</div></div>
<div class="row" style="top:108px"><div class="c c0 e"><svg width="12" height="12" viewBox="0 0 12 12" class="arr"><use href="#arrow"/></svg></div><div class="c c1 e"><span class="tca"><b style="color:#e01010">T</b><b style="color:#2030d0">C</b><b style="color:#108a10">A</b></span><span class="hit">Acinetobacter halotolerans - KT032155 Bacteria Pseudom…</span></div><div class="c c2 n d2a">882</div><div class="c c3 n d2">97.95</div><div class="c c4 n d2">98.58</div><div class="c c5 n d3">33.24</div></div>
<div class="row" style="top:126px"><div class="c c0 w"><svg width="12" height="12" viewBox="0 0 12 12" class="arr"><use href="#arrow"/></svg></div><div class="c c1 w"><span class="tca"><b style="color:#e01010">T</b><b style="color:#2030d0">C</b><b style="color:#108a10">A</b></span><span class="hit">Acinetobacter geminorum - MT380471 Bacteria Pseudomo…</span></div><div class="c c2 n d2a">874</div><div class="c c3 n d2">97.36</div><div class="c c4 n d1">100.00</div><div class="c c5 n d3">33.77</div></div>
<div class="row" style="top:144px"><div class="c c0 e"><svg width="12" height="12" viewBox="0 0 12 12" class="arr"><use href="#arrow"/></svg></div><div class="c c1 e"><span class="tca"><b style="color:#e01010">T</b><b style="color:#2030d0">C</b><b style="color:#108a10">A</b></span><span class="hit">Acinetobacter sichuanensis - MH179327 Bacteria Pseudom…</span></div><div class="c c2 n d2a">866</div><div class="c c3 n d2">97.16</div><div class="c c4 n d1">100.00</div><div class="c c5 n d3">32.33</div></div>
<div class="row" style="top:162px"><div class="c c0 w"><svg width="12" height="12" viewBox="0 0 12 12" class="arr"><use href="#arrow"/></svg></div><div class="c c1 w"><span class="tca"><b style="color:#e01010">T</b><b style="color:#2030d0">C</b><b style="color:#108a10">A</b></span><span class="hit">Acinetobacter cumulans - CP035934 Bacteria Pseudomona…</span></div><div class="c c2 n d2">860</div><div class="c c3 n d2">97.17</div><div class="c c4 n d1">100.00</div><div class="c c5 n d3">32.22</div></div>
<div class="row" style="top:180px"><div class="c c0 e"><svg width="12" height="12" viewBox="0 0 12 12" class="arr"><use href="#arrow"/></svg></div><div class="c c1 e"><span class="tca"><b style="color:#e01010">T</b><b style="color:#2030d0">C</b><b style="color:#108a10">A</b></span><span class="hit">Acinetobacter pragensis - KX014586 Bacteria Pseudomon…</span></div><div class="c c2 n d2">858</div><div class="c c3 n d2">96.96</div><div class="c c4 n d1">100.00</div><div class="c c5 n d3">33.09</div></div>
<div class="row" style="top:198px"><div class="c c0 w"><svg width="12" height="12" viewBox="0 0 12 12" class="arr"><use href="#arrow"/></svg></div><div class="c c1 w"><span class="tca"><b style="color:#e01010">T</b><b style="color:#2030d0">C</b><b style="color:#108a10">A</b></span><span class="hit">Acinetobacter pseudolwoffii - PHRG01000000 Bacteria Ps…</span></div><div class="c c2 n d2">854</div><div class="c c3 n d2">97.58</div><div class="c c4 n d1">100.00</div><div class="c c5 n d3">31.99</div></div>
<div class="row" style="top:216px"><div class="c c0 e"><svg width="12" height="12" viewBox="0 0 12 12" class="arr"><use href="#arrow"/></svg></div><div class="c c1 e"><span class="tca"><b style="color:#e01010">T</b><b style="color:#2030d0">C</b><b style="color:#108a10">A</b></span><span class="hit">Acinetobacter lwoffii - APQS01000019 Bacteria Pseudomo…</span></div><div class="c c2 n d2">852</div><div class="c c3 n d2">97.17</div><div class="c c4 n d1">100.00</div><div class="c c5 n d3">32.31</div></div>
<div class="row" style="top:234px"><div class="c c0 w"><svg width="12" height="12" viewBox="0 0 12 12" class="arr"><use href="#arrow"/></svg></div><div class="c c1 w"><span class="tca"><b style="color:#e01010">T</b><b style="color:#2030d0">C</b><b style="color:#108a10">A</b></span><span class="hit">Acinetobacter equi - KC494698 Bacteria Pseudomonadota…</span></div><div class="c c2 n d2">850</div><div class="c c3 n d2">96.75</div><div class="c c4 n d1">100.00</div><div class="c c5 n d3">32.37</div></div>
<div class="row" style="top:252px"><div class="c c0 e"><svg width="12" height="12" viewBox="0 0 12 12" class="arr"><use href="#arrow"/></svg></div><div class="c c1 e"><span class="tca"><b style="color:#e01010">T</b><b style="color:#2030d0">C</b><b style="color:#108a10">A</b></span><span class="hit">Acinetobacter schindleri - APPQ01000011 Bacteria Pseudo…</span></div><div class="c c2 n d2">850</div><div class="c c3 n d2">96.75</div><div class="c c4 n d1">100.00</div><div class="c c5 n d3">32.31</div></div>
</div>
<!-- hits bar -->
<div class="a" style="left:1096px;top:584px;width:1px;height:15px;background:#a0a0a0"></div>
<div class="t" style="left:1102px;top:584px">Hits: 41</div>
<!-- legend -->
<div class="a" style="left:505px;top:601px;width:642px;height:4px;background:#f9f9f9"></div><div class="a" style="left:505px;top:601px;width:642px;height:1px;background:#fff"></div>
<div class="a" style="left:505px;top:605px;width:641px;height:195px;border:1px solid #70757c;border-width:1px 1px 1px 2px;background:#fff"></div>
<div class="a" style="left:1130px;top:606px;width:15px;height:193px;background:#f0f0f0"></div>
<div class="a" style="left:1137px;top:623px;width:1px;height:146px;background:#7a7a7a"></div>
<div class="leg" style="left:516.5px;top:611px;letter-spacing:-0.28px">Color Legend for BLAST Search</div>
<div class="leg" style="left:521.5px;top:630px">(using default bacteria identity thresholds)</div>
<div class="a" style="left:519px;top:649px;width:67px;height:20px;background:#66dd22"></div>
<div class="leg" style="left:524px;top:652px">Green row:</div>
<div class="leg" style="left:590px;top:652px;letter-spacing:0.08px">Species match with identity ≥ 99.0% with &gt; 0.8% separation and aligned = 100% with length ≥ 450nt</div>
<div class="a" style="left:519px;top:671px;width:67px;height:20px;background:#ffe11a"></div>
<div class="leg" style="left:524px;top:674px">Yellow row:</div>
<div class="leg" style="left:590px;top:674px;letter-spacing:0.07px">Genus match with identity ≥ 97.0% and aligned = 100% with length ≥ 450nt</div>
<div class="leg" style="left:521.5px;top:696px">Matches below identity 95.0% or aligned 95.0% are not shown.</div>
<div class="leg" style="left:516.5px;top:729px;letter-spacing:-0.26px">LTP Release: LTP_10_2024</div>
<div class="leg" style="left:516.5px;top:757px">Citation:</div>
<div class="leg" style="left:516.5px;top:771px;font-weight:bold;letter-spacing:0.23px">Yarza P, Richter M, Peplies J, Euzeby J, Amann R, Schleifer KH, Ludwig W, Glöckner FO, and Rosselló-Móra</div>
<div class="leg" style="left:516.5px;top:785px;height:13px;overflow:hidden;letter-spacing:-0.08px"><b>R.</b> The All-Species Living Tree project: a 16S rRNA-based phylogenetic tree of all sequenced type strains. <i>Syst Appl</i></div>
<!-- button -->
<div class="a" style="left:991px;top:812px;width:145px;height:23px;border:1px solid #cccccc;border-radius:3.5px;background:#fdfdfd"></div>
<svg class="a" style="left:1006px;top:815px" width="17" height="17" viewBox="0 0 17 17"><use href="#tgear"/></svg>
<div class="t" style="left:1025px;top:816px">Restart Genotyping</div>
</div>
<!-- footer -->
<div class="t" style="left:287px;top:882px;letter-spacing:-0.2px">Owner: demo</div>
<div class="t" style="left:361px;top:882px">View:</div>
<svg class="a" style="left:389px;top:880px" width="16" height="16" viewBox="0 0 16 16"><use href="#grp"/></svg>
<div class="t" style="left:404px;top:882px">anyone</div>
<div class="t" style="left:450px;top:882px">Edit:</div>
<svg class="a" style="left:475px;top:880px" width="16" height="16" viewBox="0 0 16 16"><use href="#grp"/></svg>
<div class="t" style="left:490px;top:882px">anyone</div>
<svg class="a" style="left:549px;top:879px" width="18" height="18" viewBox="0 0 18 18"><rect x="1.5" y="3.5" width="10" height="13" fill="#f6f6f6" stroke="#6a7a9a"/><path d="M3.5 7 H9.5 M3.5 9.5 H9.5 M3.5 12 H8" stroke="#8a96b0" stroke-width="0.9"/><path d="M15.5 2 L17 3.5 L9.5 11.5 L7.5 12.5 L8.3 10.3 Z" fill="#e8b84a" stroke="#8a6a1a" stroke-width="0.7"/></svg>
</div>

<!-- status bar -->
<div id="status" class="a" style="left:0;top:914px;width:1171px;height:28px">
<div class="a" style="left:964px;top:4px;width:180px;height:16px;border:1px solid #bcbcbc;background:#e6e6e6"></div>
<div class="a" style="left:1148px;top:4px;width:16px;height:16px;border:2.5px solid #d7dadd;border-radius:50%"></div>
</div>

</div>
<div id="frame" class="a"></div>
</body>
</html>
